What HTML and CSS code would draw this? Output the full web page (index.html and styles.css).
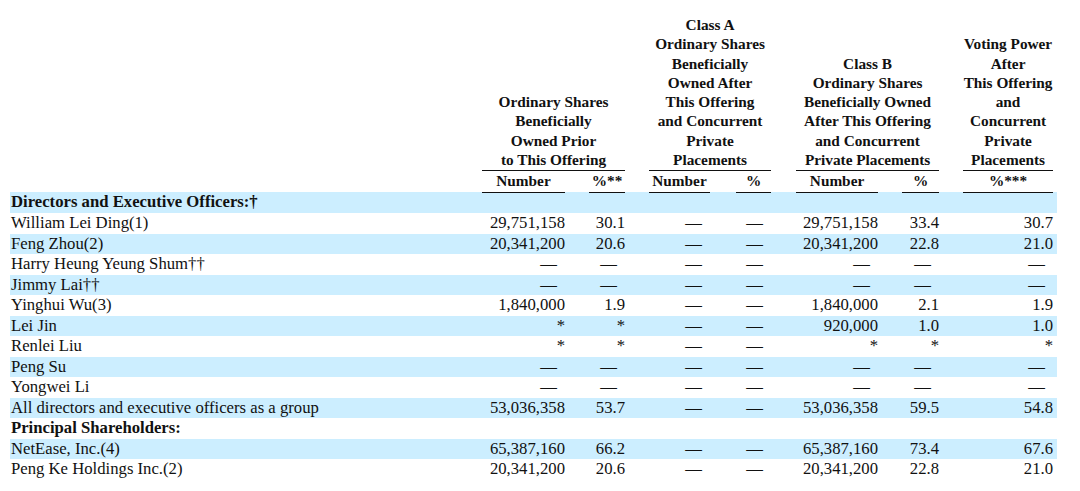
FILE: index.html
```html
<!DOCTYPE html>
<html lang="en">
<head>
<meta charset="utf-8">
<title>Beneficial Ownership</title>
<link rel="stylesheet" href="styles.css">
</head>
<body>
<table class="own">
  <colgroup>
    <col class="c-label"><col class="c-n1"><col class="c-g24"><col class="c-p1"><col class="c-g24">
    <col class="c-n2"><col class="c-g26"><col class="c-p2"><col class="c-g25">
    <col class="c-n3"><col class="c-g24"><col class="c-p3"><col class="c-g24">
    <col class="c-p4"><col class="c-end">
  </colgroup>
  <thead>
    <tr class="h-group">
      <th></th>
      <th colspan="3" class="ul">Ordinary Shares<br>Beneficially<br>Owned Prior<br>to This Offering</th>
      <th></th>
      <th colspan="3" class="ul">Class A<br>Ordinary Shares<br>Beneficially<br>Owned After<br>This Offering<br>and Concurrent<br>Private<br>Placements</th>
      <th></th>
      <th colspan="3" class="ul">Class B<br>Ordinary Shares<br>Beneficially Owned<br>After This Offering<br>and Concurrent<br>Private Placements</th>
      <th></th>
      <th class="ul">Voting Power<br>After<br>This Offering<br>and<br>Concurrent<br>Private<br>Placements</th>
      <th></th>
    </tr>
    <tr class="h-sub">
      <th></th>
      <th class="ul">Number</th><th></th><th class="ul">%**</th><th></th>
      <th class="ul">Number</th><th></th><th class="ul">%</th><th></th>
      <th class="ul">Number</th><th></th><th class="ul">%</th><th></th>
      <th class="ul">%***</th><th></th>
    </tr>
  </thead>
  <tbody>
    <tr class="b"><td class="lbl strong">Directors and Executive Officers:†</td><td></td><td></td><td></td><td></td><td></td><td></td><td></td><td></td><td></td><td></td><td></td><td></td><td></td><td></td></tr>
    <tr><td class="lbl">William Lei Ding(1)</td><td>29,751,158</td><td></td><td>30.1</td><td></td><td class="d">—</td><td></td><td class="d">—</td><td></td><td>29,751,158</td><td></td><td>33.4</td><td></td><td>30.7</td><td></td></tr>
    <tr class="b"><td class="lbl">Feng Zhou(2)</td><td>20,341,200</td><td></td><td>20.6</td><td></td><td class="d">—</td><td></td><td class="d">—</td><td></td><td>20,341,200</td><td></td><td>22.8</td><td></td><td>21.0</td><td></td></tr>
    <tr><td class="lbl">Harry Heung Yeung Shum††</td><td class="d">—</td><td></td><td class="d">—</td><td></td><td class="d">—</td><td></td><td class="d">—</td><td></td><td class="d">—</td><td></td><td class="d">—</td><td></td><td class="d">—</td><td></td></tr>
    <tr class="b"><td class="lbl">Jimmy Lai††</td><td class="d">—</td><td></td><td class="d">—</td><td></td><td class="d">—</td><td></td><td class="d">—</td><td></td><td class="d">—</td><td></td><td class="d">—</td><td></td><td class="d">—</td><td></td></tr>
    <tr><td class="lbl">Yinghui Wu(3)</td><td>1,840,000</td><td></td><td>1.9</td><td></td><td class="d">—</td><td></td><td class="d">—</td><td></td><td>1,840,000</td><td></td><td>2.1</td><td></td><td>1.9</td><td></td></tr>
    <tr class="b"><td class="lbl">Lei Jin</td><td>*</td><td></td><td>*</td><td></td><td class="d">—</td><td></td><td class="d">—</td><td></td><td>920,000</td><td></td><td>1.0</td><td></td><td>1.0</td><td></td></tr>
    <tr><td class="lbl">Renlei Liu</td><td>*</td><td></td><td>*</td><td></td><td class="d">—</td><td></td><td class="d">—</td><td></td><td>*</td><td></td><td>*</td><td></td><td>*</td><td></td></tr>
    <tr class="b"><td class="lbl">Peng Su</td><td class="d">—</td><td></td><td class="d">—</td><td></td><td class="d">—</td><td></td><td class="d">—</td><td></td><td class="d">—</td><td></td><td class="d">—</td><td></td><td class="d">—</td><td></td></tr>
    <tr><td class="lbl">Yongwei Li</td><td class="d">—</td><td></td><td class="d">—</td><td></td><td class="d">—</td><td></td><td class="d">—</td><td></td><td class="d">—</td><td></td><td class="d">—</td><td></td><td class="d">—</td><td></td></tr>
    <tr class="b"><td class="lbl">All directors and executive officers as a group</td><td>53,036,358</td><td></td><td>53.7</td><td></td><td class="d">—</td><td></td><td class="d">—</td><td></td><td>53,036,358</td><td></td><td>59.5</td><td></td><td>54.8</td><td></td></tr>
    <tr><td class="lbl strong">Principal Shareholders:</td><td></td><td></td><td></td><td></td><td></td><td></td><td></td><td></td><td></td><td></td><td></td><td></td><td></td><td></td></tr>
    <tr class="b"><td class="lbl">NetEase, Inc.(4)</td><td>65,387,160</td><td></td><td>66.2</td><td></td><td class="d">—</td><td></td><td class="d">—</td><td></td><td>65,387,160</td><td></td><td>73.4</td><td></td><td>67.6</td><td></td></tr>
    <tr><td class="lbl">Peng Ke Holdings Inc.(2)</td><td>20,341,200</td><td></td><td>20.6</td><td></td><td class="d">—</td><td></td><td class="d">—</td><td></td><td>20,341,200</td><td></td><td>22.8</td><td></td><td>21.0</td><td></td></tr>
  </tbody>
</table>
</body>
</html>
```

FILE: styles.css
```css
html, body {
  margin: 0;
  padding: 0;
  background: #ffffff;
}

body {
  color: #111111;
  font-family: "Liberation Serif", "Times New Roman", serif;
}

.own {
  margin: 15px 0 0 10px;
  width: 1047px;
  table-layout: fixed;
  border-collapse: collapse;
  border-spacing: 0;
}

.c-label { width: 472px; }
.c-n1 { width: 83px; }
.c-p1 { width: 36px; }
.c-n2 { width: 61px; }
.c-p2 { width: 35px; }
.c-n3 { width: 82px; }
.c-p3 { width: 37px; }
.c-p4 { width: 90px; }
.c-g24 { width: 24px; }
.c-g25 { width: 25px; }
.c-g26 { width: 26px; }
.c-end { width: 4px; }

.own th {
  padding: 0 0 1px;
  font-size: 15.3px;
  font-weight: bold;
  line-height: 19.3px;
  text-align: center;
  vertical-align: bottom;
  white-space: nowrap;
}

.own th.ul {
  border-bottom: 1px solid #111111;
}

.own td {
  height: 20.5px;
  padding: 0;
  font-size: 16.7px;
  line-height: 20.5px;
  text-align: right;
  vertical-align: middle;
  white-space: nowrap;
}

.own td.lbl {
  padding-left: 1px;
  text-align: left;
}

.own td.strong {
  font-weight: bold;
}

.own td.d {
  padding-right: 8px;
}

.own tr.b td {
  background: #cceeff;
}
```
